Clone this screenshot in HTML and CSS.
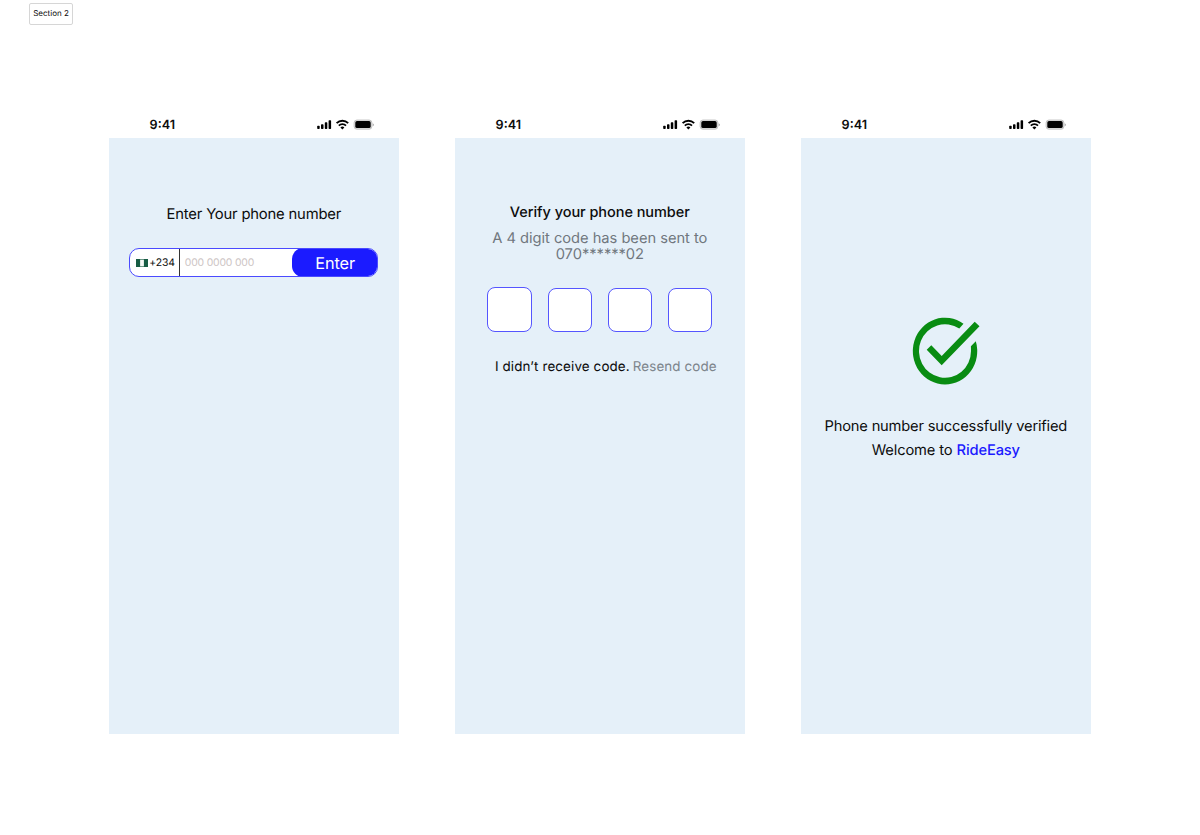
FILE: index.html
```html
<!DOCTYPE html>
<html lang="en">
<head>
<meta charset="utf-8">
<title>Section 2</title>
<link rel="stylesheet" href="styles.css">
</head>
<body>
<svg width="0" height="0" class="defs" aria-hidden="true">
  <symbol id="status" viewBox="0 0 58 12">
    <rect x="0.2" y="6.7" width="2.5" height="3.3" rx=".7"/>
    <rect x="4" y="5.2" width="2.5" height="4.8" rx=".7"/>
    <rect x="7.8" y="3.2" width="2.5" height="6.8" rx=".7"/>
    <rect x="11.6" y="1.2" width="2.5" height="8.8" rx=".7"/>
    <path d="M19.6 4.1a8.5 8.5 0 0 1 11.6 0" fill="none" stroke="#000" stroke-width="1.9"/>
    <path d="M21.8 6.6a5.3 5.3 0 0 1 7.2 0" fill="none" stroke="#000" stroke-width="1.8"/>
    <path d="M23.4 8.4a2.9 2.9 0 0 1 4 0L25.4 10.4z"/>
    <rect x="37.1" y="1" width="17.8" height="9.2" rx="2.8" fill="#ddd" stroke="#bbb" stroke-width=".8"/>
    <rect x="38.3" y="2.1" width="15.4" height="7" rx="1.7"/>
    <path d="M55.7 4.2q1.2.5 1.2 1.5t-1.2 1.5z" fill="#aaa"/>
  </symbol>
</svg>
<div class="section-label">Section 2</div>
<main class="board">
  <section class="phone">
    <header class="status-bar"><span class="time">9:41</span><svg class="status-icons"><use href="#status"/></svg></header>
    <div class="screen">
      <h1 class="title enter-title">Enter Your phone number</h1>
      <div class="phone-field">
        <div class="country"><svg class="flag" viewBox="0 0 12 8"><rect width="12" height="8" fill="#175c44"/><rect x="4.1" y=".6" width="3.8" height="6.8" fill="#f5f8f6"/></svg><span>+234</span></div>
        <div class="number">000 0000 000</div>
        <div class="enter">Enter</div>
      </div>
    </div>
  </section>
  <section class="phone">
    <header class="status-bar"><span class="time">9:41</span><svg class="status-icons"><use href="#status"/></svg></header>
    <div class="screen">
      <h1 class="title verify-title">Verify your phone number</h1>
      <p class="sent">A 4 digit code has been sent to<br>070******02</p>
      <div class="code"><div class="digit first"></div><div class="digit"></div><div class="digit"></div><div class="digit"></div></div>
      <p class="resend"><span>I didn’t receive code.</span><span class="link">Resend code</span></p>
    </div>
  </section>
  <section class="phone">
    <header class="status-bar"><span class="time">9:41</span><svg class="status-icons"><use href="#status"/></svg></header>
    <div class="screen">
      <svg class="check" viewBox="12 6 68 70" fill="#098c12">
        <path d="M74.7 11.7 79.5 16.3 41.7 55.3 26.7 39.8 31.3 35.2 41.7 46z"/>
        <path d="M63.5 13.7A32.2 33.4 0 1 0 75.8 31.2L70.9 36.2Q71 38.5 71 41A26 26.8 0 1 1 59.3 18.6z"/>
      </svg>
      <p class="done">Phone number successfully verified</p>
      <p class="welcome">Welcome to <span class="brand">RideEasy</span></p>
    </div>
  </section>
</main>
</body>
</html>
```
FILE: styles.css
```css
* { box-sizing: border-box; }
body {
  margin: 0;
  height: 835px;
  background: #fff;
  color: #0c0c0c;
  font-family: Inter, "Liberation Sans", sans-serif;
  text-rendering: geometricPrecision;
  overflow: hidden;
  white-space: nowrap;
}
.defs { display: block; height: 0; }
h1, p { margin: 0; font-weight: 400; text-align: center; }
.section-label {
  width: 44px;
  height: 22px;
  margin: 3px 0 0 29px;
  border: 1px solid #d6d6d6;
  border-radius: 2px;
  font-size: 8px;
  line-height: 19px;
  text-align: center;
}
.board { display: flex; gap: 55.5px; padding: 79px 0 0 108.6px; }
.phone { width: 290.5px; height: 629.5px; display: flex; flex-direction: column; }
.status-bar {
  height: 33.5px;
  flex: none;
  display: flex;
  justify-content: space-between;
  padding: 12.5px 24px 0 41px;
}
.time { margin-top: 1px; font-size: 12.6px; font-weight: 600; line-height: 16px; }
.status-icons { width: 58px; height: 12px; margin-top: 2.5px; }
.screen { flex: 1; background: #e5f0f9; display: flex; flex-direction: column; align-items: center; }
.title { font-size: 14.8px; line-height: 20px; letter-spacing: -.19px; }
.enter-title { margin-top: 66px; }
.phone-field {
  display: flex;
  width: 249px;
  height: 29px;
  margin-top: 24.5px;
  border: 1px solid #4a4aff;
  border-radius: 10px;
  background: #fff;
  overflow: hidden;
}
.country {
  display: flex;
  align-items: center;
  width: 49.5px;
  padding-left: 6px;
  border-right: 1px solid #333;
  font-size: 10.4px;
}
.country span { letter-spacing: -.1px; }
.flag { width: 12px; height: 8px; margin-right: 1px; flex: none; }
.number { flex: 1; padding-left: 5px; font-size: 10.4px; line-height: 28px; letter-spacing: -.18px; color: #cdc5c5; }
.enter {
  width: 86.5px;
  margin: -1px;
  border-radius: 11px;
  background: #1b1bff;
  color: #fff;
  font-size: 16.3px;
  line-height: 30px;
  letter-spacing: -.1px;
  text-align: center;
}
.verify-title { margin-top: 65px; font-weight: 500; font-size: 14.5px; letter-spacing: -.05px; }
.sent { margin-top: 7.5px; font-size: 14.7px; line-height: 16px; letter-spacing: -.03px; color: #70777e; }
.code { display: flex; align-items: center; gap: 16px; margin-top: 25.2px; }
.digit { width: 44px; height: 44px; border: 1px solid #5555ff; border-radius: 8px; background: #fff; }
.digit.first { width: 45px; height: 45px; }
.resend { display: flex; gap: 3px; margin: 24.5px 0 0 12px; font-size: 13.4px; letter-spacing: .12px; line-height: 20px; }
.link { color: #7d858c; }
.check { width: 68px; height: 70px; margin-top: 178.5px; }
.done { margin-top: 30px; font-size: 14.7px; line-height: 20px; letter-spacing: -.19px; }
.welcome { margin-top: 4px; font-size: 14.7px; line-height: 20px; letter-spacing: -.13px; }
.brand { color: #1b1bff; font-weight: 500; }
```
